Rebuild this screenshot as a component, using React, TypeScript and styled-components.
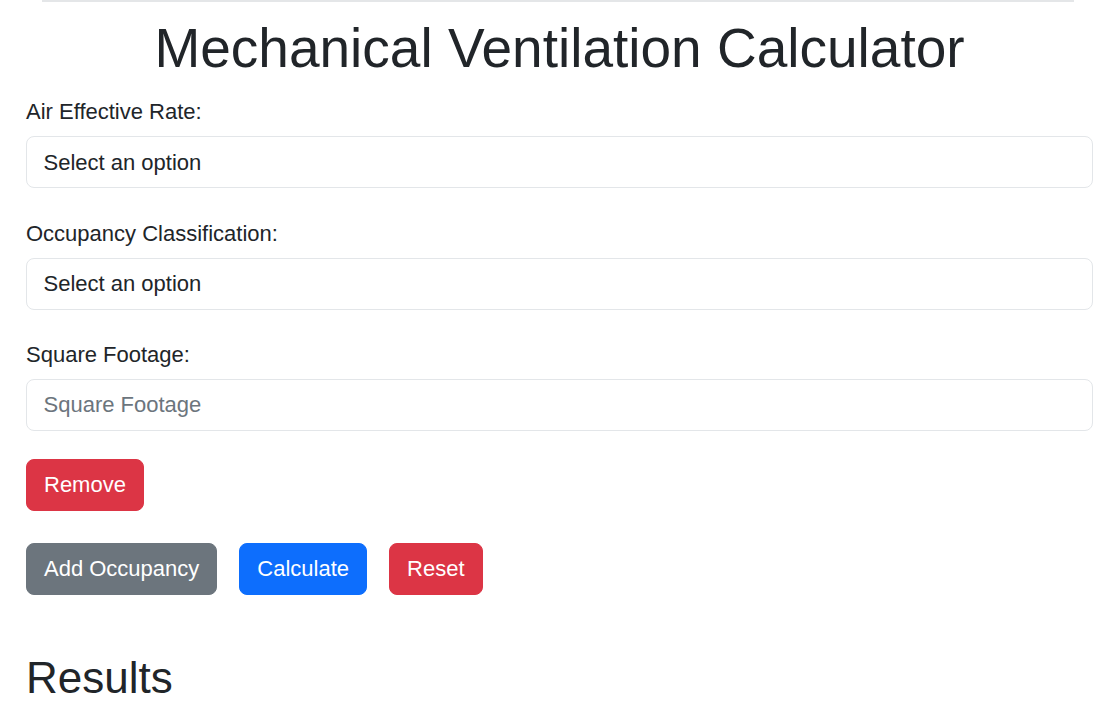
import styled, { createGlobalStyle } from "styled-components";

const GlobalStyle = createGlobalStyle`
  html, body {
    margin: 0;
    padding: 0;
    background: #ffffff;
  }
  body {
    font-family: "Liberation Sans", Arial, sans-serif;
    color: #212529;
  }
`;

const Page = styled.div`
  width: 1067px;
  margin-left: 26px;
`;

const TopRule = styled.div`
  height: 2px;
  margin: 0 19px 0 16px;
  background: #e4e6e8;
`;

const Title = styled.h1`
  margin: 13px 0 14px;
  font-size: 55px;
  font-weight: 400;
  line-height: 1.2;
  text-align: center;
  color: #212529;
`;

const Group = styled.div`
  margin-bottom: 28.5px;
`;

const Label = styled.label`
  display: block;
  margin-bottom: 8px;
  font-size: 22px;
  line-height: 33px;
  color: #212529;
`;

const fieldBase = `
  display: block;
  box-sizing: border-box;
  width: 100%;
  height: 52px;
  padding: 0 16.5px;
  font-family: "Liberation Sans", Arial, sans-serif;
  font-size: 22px;
  color: #212529;
  background: #ffffff;
  border: 1px solid #e3e6e9;
  border-radius: 8px;
  outline: none;
`;

const Select = styled.select`
  ${fieldBase}
  appearance: none;
  -webkit-appearance: none;
`;

const Input = styled.input`
  ${fieldBase}
  &::placeholder {
    color: #6c757d;
  }
`;

const toneColor = {
  danger: "#dc3545",
  primary: "#0d6efd",
  secondary: "#6c757d",
};

const Button = styled.button<{ $tone: keyof typeof toneColor }>`
  box-sizing: border-box;
  height: 52px;
  padding: 0 17px;
  font-family: "Liberation Sans", Arial, sans-serif;
  font-size: 22px;
  color: #ffffff;
  border-radius: 8px;
  cursor: pointer;
  background: ${({ $tone }) => toneColor[$tone]};
  border: 1px solid ${({ $tone }) => toneColor[$tone]};
`;

const RemoveRow = styled.div`
  margin-top: -1px;
  margin-bottom: 32px;
`;

const Actions = styled.div`
  display: flex;
  gap: 22px;
`;

const ResultsTitle = styled.h2`
  margin: 57px 0 0;
  font-size: 44px;
  font-weight: 400;
  line-height: 1.2;
  color: #212529;
`;

export default function App() {
  return (
    <>
      <GlobalStyle />
      <Page>
        <TopRule />
        <Title>Mechanical Ventilation Calculator</Title>
        <Group>
          <Label>Air Effective Rate:</Label>
          <Select defaultValue="">
            <option value="">Select an option</option>
          </Select>
        </Group>
        <Group>
          <Label>Occupancy Classification:</Label>
          <Select defaultValue="">
            <option value="">Select an option</option>
          </Select>
        </Group>
        <Group>
          <Label>Square Footage:</Label>
          <Input type="number" placeholder="Square Footage" />
        </Group>
        <RemoveRow>
          <Button $tone="danger">Remove</Button>
        </RemoveRow>
        <Actions>
          <Button $tone="secondary">Add Occupancy</Button>
          <Button $tone="primary">Calculate</Button>
          <Button $tone="danger">Reset</Button>
        </Actions>
        <ResultsTitle>Results</ResultsTitle>
      </Page>
    </>
  );
}
